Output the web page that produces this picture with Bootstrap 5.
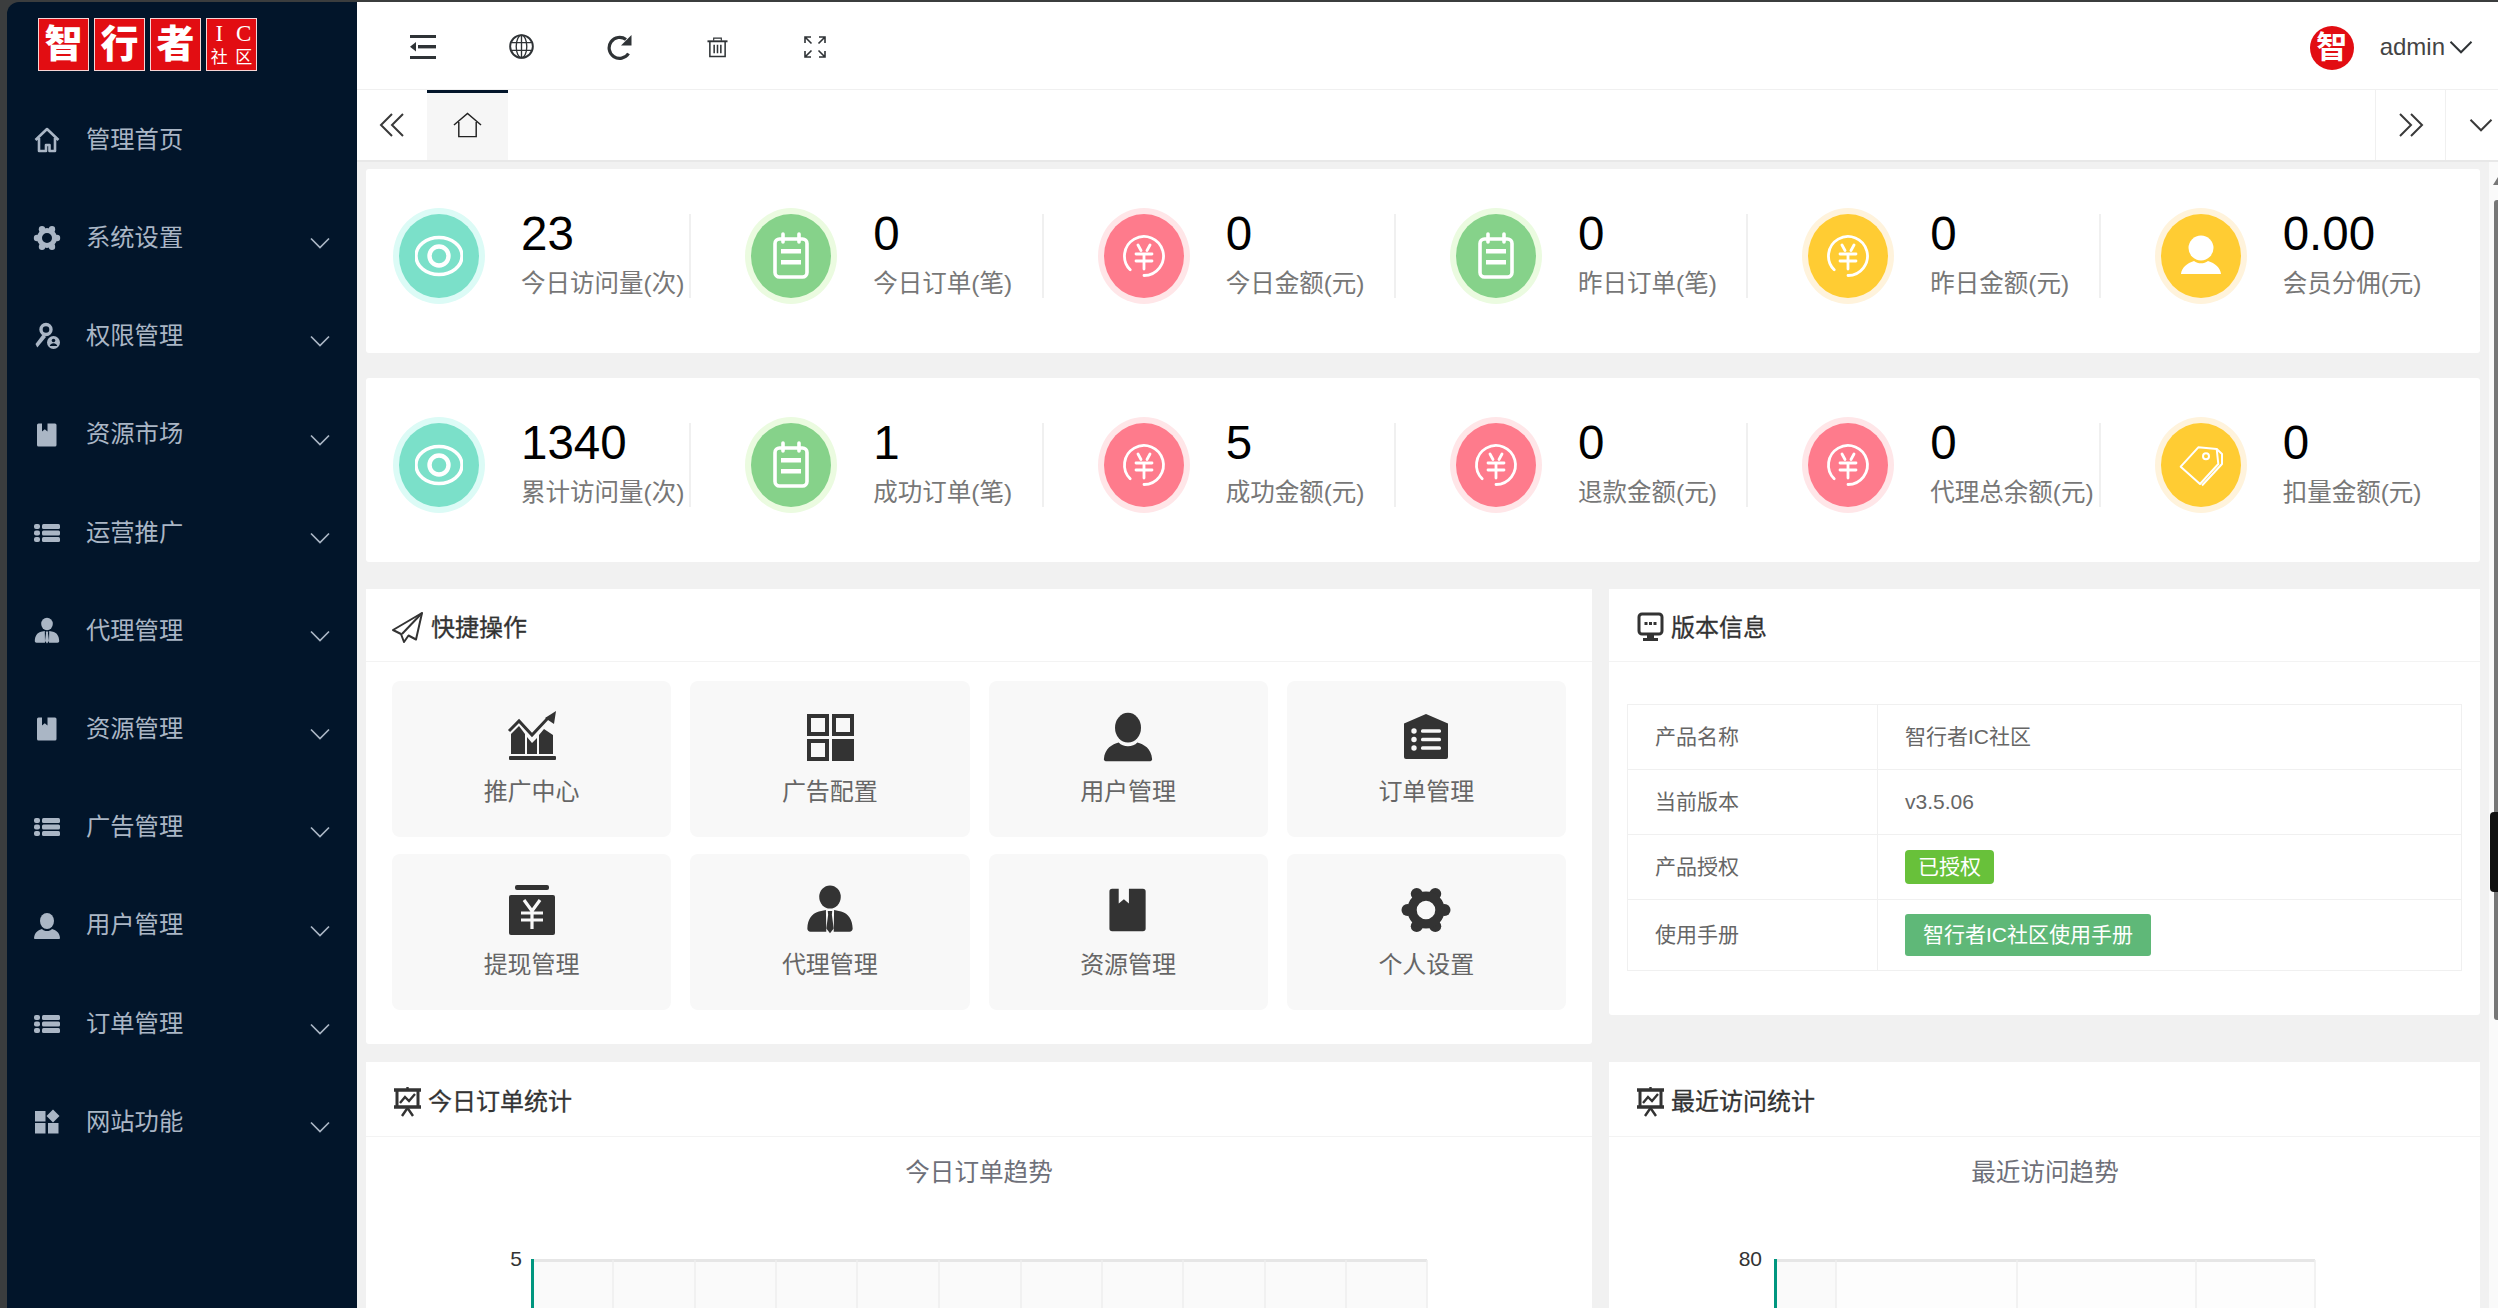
<!DOCTYPE html>
<html lang="zh-CN">
<head>
  <meta charset="UTF-8" />
  <meta name="viewport" content="width=device-width, initial-scale=1.0"/>
  <title>智行者IC社区</title>
  <link href="https://cdn.jsdelivr.net/npm/bootstrap@5.3.3/dist/css/bootstrap.min.css" rel="stylesheet" />
  <style>
    body { font-family: "Liberation Sans", "Noto Sans CJK SC", sans-serif; background: #3b3d3e; overflow: hidden; }
    .app { height: 100vh; padding: 2px 0 0 7px; }

    /* sidebar */
    .sidebar { width: 350px; flex: none; background: #02152a; border-top-left-radius: 12px; color: #aab6c5; }
    .logo { height: 89px; padding: 16px 0 0 31px; gap: 5px; }
    .stamp { width: 51px; height: 53px; background: #e20d12; border: 1px solid #f6d5d5; color: #fff; font-size: 38px; font-weight: 900; line-height: 51px; text-align: center; }
    .stamp.small { display: grid; grid-template-columns: 1fr 1fr; font-size: 17px; line-height: 24px; font-weight: 400; padding-top: 2px; }
    .stamp.small b { font: 400 23px/25px "Liberation Serif", serif; }
    .side-item { height: 98.2px; padding: 0 27px 0 26px; font-size: 24.3px; }
    .side-item .ico { width: 28px; height: 28px; margin-right: 25px; flex: none; }
    .side-item .chev { width: 20px; height: 12px; margin-left: auto; margin-top: 10px; }

    /* header */
    .main { min-width: 0; background: #fff; }
    .topbar { height: 88px; padding: 2px 0 0 17px; border-bottom: 1px solid #f0f0f0; color: #2f3336; }
    .tool { width: 98px; }
    .tool:nth-child(3) { padding-left: 2px; }
    .avatar { width: 44px; height: 44px; background: #e20d12; color: #fff; font-size: 31px; font-weight: 700; line-height: 44px; margin-right: 26px; margin-top: 2px; text-align: center; }
    .admin { font-size: 24px; color: #444; }
    .tabbar { height: 72px; border-bottom: 2px solid #e8e8e8; color: #3a3a3a; }
    .tab-arrow { width: 70px; }
    .tab-home { width: 81px; background: #f6f6f6; border-top: 3px solid #02152a; padding-bottom: 4px; color: #222; }
    .tab-side { border-left: 1px solid #f0f0f0; }

    /* content */
    .content { background: #f1f1f1; padding: 7px 18px 0 9px; height: calc(100vh - 162px); overflow: hidden; position: relative; }
    .panel { border: 0; border-radius: 3px; background: #fff; }
    .stats { height: 184px; margin-bottom: 25px; padding-top: 45px; }
    .stat { width: 16.6666%; padding-left: 33px; }
    .stat-in { height: 84px; margin-right: 27px; border-right: 2px solid #f0f0f0; }
    .circle { width: 80px; height: 84px; flex: none; color: #fff; }
    .circle svg { width: 48px; height: 48px; }
    .c-teal { background: #7be0c9; box-shadow: 0 0 0 6px #dcfbf6; }
    .c-green { background: #86d28a; box-shadow: 0 0 0 6px #ebfbe0; }
    .c-pink { background: #fe7b8c; box-shadow: 0 0 0 6px #ffe6e8; }
    .c-yellow { background: #ffcc33; box-shadow: 0 0 0 6px #fff3dc; }
    .stat-text { margin: -5px 0 0 42px; white-space: nowrap; }
    .num { font-size: 47.500px; line-height: 50px; color: #000; }
    .lbl { font-size: 24.500px; line-height: 34px; margin-top: 8px; color: #777; }

    .dash { display: grid; grid-template-columns: 1226fr 871fr; gap: 18px 17px; align-items: start; margin-top: 27px; }
    .panel-head { height: 73px; padding: 5px 0 0 26px; border-bottom: 1px solid #f3f3f3; background: #fff; font-size: 24px; color: #333; -webkit-text-stroke: .3px #333; }
    .panel-head.tall { height: 75px; }
    .panel-head svg { width: 31px; height: 31px; margin-right: 8px; flex: none; }
    .panel-head svg.tight { margin-right: 5px; }
    .quick { display: grid; grid-template-columns: repeat(4, 1fr); gap: 17px 19px; padding: 19px 26px 34px; }
    .quick-item { height: 156px; background: #f8f8f8; border-radius: 8px; padding-top: 30px; font-size: 24px; color: #666; }
    .quick-item svg { width: 52px; height: 52px; color: #333; margin-bottom: 11px; }
    .info-body { padding: 42px 18px 44px; }
    .info-table { margin: 0; font-size: 21px; color: #666; --bs-table-border-color: #f0f0f0; --bs-table-color: #666; }
    .info-table td { height: 65px; padding: 0 27px; vertical-align: middle; }
    .info-table td:first-child { width: 250px; }
    .info-table tr:last-child td { height: 71px; }
    .auth { background: #68c13a; font-size: 21px; font-weight: 400; padding: 6px 13px; border-radius: 4px; line-height: 22px; }
    .manual { background: #5fb878; color: #fff; font-size: 21px; padding: 0 18px; height: 42px; line-height: 42px; border: 0; border-radius: 3px; }
    .chart text { font-family: "Liberation Sans", "Noto Sans CJK SC", sans-serif; }

    /* window scrollbar over the content */
    .sb { position: absolute; top: 0; right: 0; bottom: 0; width: 9px; background: #fafafa; }
    .sb-thumb { position: absolute; top: 38px; right: 0; width: 4px; height: 820px; background: #777; border-radius: 3px 0 0 3px; }
    .sb-blob { position: absolute; top: 650px; right: 0; width: 8px; height: 80px; background: #111; border-radius: 4px 0 0 4px; }
  </style>
</head>
<body>

  <svg class="d-none" xmlns="http://www.w3.org/2000/svg">
    <symbol id="i-home" viewBox="0 0 28 28"><path d="M2.500 14 14 3l11.500 11M6 12v13h7v-6h3.500v6H22V12" fill="none" stroke="currentColor" stroke-width="2.600" stroke-linejoin="round"/></symbol>
    <symbol id="i-gear" viewBox="0 0 28 28"><g fill="currentColor"><circle cx="9" cy="5.300" r="3.200"/><circle cx="19" cy="5.300" r="3.200"/><circle cx="4" cy="14" r="3.200"/><circle cx="24" cy="14" r="3.200"/><circle cx="9" cy="22.700" r="3.200"/><circle cx="19" cy="22.700" r="3.200"/></g><circle cx="14" cy="14" r="7.500" fill="none" stroke="currentColor" stroke-width="5"/></symbol>
    <symbol id="i-key" viewBox="0 0 28 28"><circle cx="13" cy="7.500" r="5" fill="none" stroke="currentColor" stroke-width="3.400"/><path d="M10 12 2.500 22l1.800 3.500L13 15" fill="currentColor"/><circle cx="20.500" cy="20.500" r="6.500" fill="currentColor"/><circle cx="20.500" cy="18.500" r="1.800" fill="#02152a"/><path d="M16.800 24h7.400c-.4-2-2-2.800-3.700-2.800s-3.300.8-3.700 2.800z" fill="#02152a"/></symbol>
    <symbol id="i-book" viewBox="0 0 28 28"><path d="M5.500 2.500H9v8l2.800-2.300 2.700 2.300v-8h7.500a1.500 1.500 0 0 1 1.500 1.500v20a1.500 1.500 0 0 1-1.500 1.500H5.500A1.500 1.500 0 0 1 4 24V4a1.500 1.500 0 0 1 1.500-1.500z" fill="currentColor"/></symbol>
    <symbol id="i-list" viewBox="0 0 28 28"><g fill="currentColor"><rect x="1" y="5" width="6" height="5" rx="2"/><rect x="1" y="11.500" width="6" height="5" rx="2"/><rect x="1" y="18" width="6" height="5" rx="2"/><rect x="9" y="5" width="18" height="5" rx="1.500"/><rect x="9" y="11.500" width="18" height="5" rx="1.500"/><rect x="9" y="18" width="18" height="5" rx="1.500"/></g></symbol>
    <symbol id="i-agent" viewBox="0 0 28 28"><g fill="currentColor"><ellipse cx="14" cy="7" rx="5.800" ry="6.200"/><path d="M11.800 14 8 14.800C4 16 2 19 1.800 24c0 1 .7 1.700 1.700 1.700H12zM16.200 14l3.800.8c4 1.200 6 4.200 6.200 9.200 0 1-.7 1.700-1.700 1.700H16z"/><path d="M12.800 14.500h2.400l-.2 2 1 7.500-2 2.500-2-2.500 1-7.500z"/></g></symbol>
    <symbol id="i-user" viewBox="0 0 28 28"><g fill="currentColor"><ellipse cx="14" cy="9" rx="7" ry="8"/><path d="M1 26c.5-6 4.500-8 8-9 1.200 1.400 3 2 5 2s3.800-.6 5-2c3.500 1 7.500 3 8 9 0 .5-.5 1-1 1H2c-.5 0-1-.5-1-1z"/></g></symbol>
    <symbol id="i-apps" viewBox="0 0 28 28"><g fill="currentColor"><rect x="2" y="3" width="10.500" height="10.500"/><rect x="2" y="15" width="10.500" height="10.500"/><rect x="15" y="15" width="10.500" height="10.500"/><path d="m20 1.500 6.500 6.500-6.500 6.500L13.500 8z"/></g></symbol>
    <symbol id="i-chev" viewBox="0 0 20 12"><path d="m1 1.500 9 9 9-9" fill="none" stroke="currentColor" stroke-width="1.700"/></symbol>

    <symbol id="i-indent" viewBox="0 0 26 24"><g fill="currentColor"><rect y="0" width="26" height="3"/><rect x="8" y="10" width="18" height="3.400"/><rect y="21" width="26" height="3"/><path d="M0 11.700 6 7v9.400z"/></g></symbol>
    <symbol id="i-globe" viewBox="0 0 26 26"><g fill="none" stroke="currentColor"><circle cx="13" cy="13" r="11.800" stroke-width="2"/><ellipse cx="13" cy="13" rx="5.500" ry="11.800" stroke-width="1.400"/><path d="M13 1v24M2 9h22M2 17h22" stroke-width="1.400"/></g></symbol>
    <symbol id="i-refresh" viewBox="0 0 26 26"><path d="M21.500 19.500A10.500 10.500 0 1 1 19 5.500" fill="none" stroke="currentColor" stroke-width="3.200"/><path d="M24.500 1v10.500H14z" fill="currentColor"/></symbol>
    <symbol id="i-trash" viewBox="0 0 22 22"><g fill="none" stroke="currentColor"><path d="M.5 4.500h21" stroke-width="2"/><path d="M7 4V1.200h8V4" stroke-width="1.200"/><path d="M3 5v15.500h16V5" stroke-width="1.600"/><path d="M7.500 8v9M11 8v9M14.500 8v9" stroke-width="1.600"/></g></symbol>
    <symbol id="i-full" viewBox="0 0 22 22"><g fill="none" stroke="currentColor" stroke-width="1.600"><path d="M1 7V1h6M1 1l6.500 6.500M15 1h6v6M21 1l-6.500 6.500M1 15v6h6M1 21l6.500-6.500M21 15v6h-6M21 21l-6.500-6.500"/></g></symbol>
    <symbol id="i-dleft" viewBox="0 0 26 26"><path d="M13 2 2 13l11 11M24 2 13 13l11 11" fill="none" stroke="currentColor" stroke-width="2"/></symbol>
    <symbol id="i-dright" viewBox="0 0 26 26"><path d="m2 2 11 11L2 24M13 2l11 11-11 11" fill="none" stroke="currentColor" stroke-width="2"/></symbol>
    <symbol id="i-homeline" viewBox="0 0 30 26"><path d="M1 13 15 1l14 12M6 10v15h18V10" fill="none" stroke="currentColor" stroke-width="1.500"/></symbol>

    <symbol id="s-eye" viewBox="0 0 48 48"><ellipse cx="24" cy="24" rx="23" ry="18.500" fill="none" stroke="currentColor" stroke-width="3.400"/><circle cx="24" cy="24" r="9.500" fill="none" stroke="currentColor" stroke-width="4.400"/></symbol>
    <symbol id="s-clip" viewBox="0 0 48 48"><g fill="none" stroke="currentColor" stroke-width="3.600" stroke-linecap="round"><rect x="8" y="7" width="32" height="38" rx="4.500"/><path d="M16 2v8M32 2v8"/></g><rect x="14" y="17" width="20" height="4.500" fill="currentColor"/><rect x="14" y="28" width="20" height="4.500" fill="currentColor"/></symbol>
    <symbol id="s-yen" viewBox="0 0 48 48"><g fill="none" stroke="currentColor" stroke-width="2.800" stroke-linecap="round"><path d="M10.200 37.800A19.500 19.500 0 1 1 24 43.500"/><path d="M18 13l3 5.500M30 13l-3 5.500M16 22h16M16 29h16M24 22v15"/></g></symbol>
    <symbol id="s-user" viewBox="0 0 48 48"><g fill="currentColor"><circle cx="24" cy="16" r="12.500"/><path d="M4 42c.5-6 6-11 13-13 2 1.500 4.500 2.300 7 2.300s5-.8 7-2.300c7 2 12.500 7 13 13z"/></g></symbol>
    <symbol id="s-tag" viewBox="0 0 48 48"><g fill="none" stroke="currentColor" stroke-width="2" stroke-linejoin="round"><path d="M3.700 25.700 21.300 6.300 39.700 8l1.600 15L23 43z"/><path d="M39.700 8l5.300 5v10L25 44.500"/><circle cx="29" cy="15.300" r="3"/></g></symbol>

    <symbol id="q-chart" viewBox="0 0 52 52"><g fill="currentColor"><rect x="3" y="45" width="47" height="4" rx="1"/><path d="M5 43V23l8-8 6 8v20zM21 43V26l5 6 5-5v16zM33 43V24l5-6 9 6v19z"/></g><path d="M3 22 13 12l13 15 16-21" fill="none" stroke="#f8f8f8" stroke-width="1"/><path d="M3 20 13 10l13 14L42 7" fill="none" stroke="currentColor" stroke-width="3"/><path d="M50 0l-2 13-9-6z" fill="currentColor"/></symbol>
    <symbol id="q-grid" viewBox="0 0 52 52"><g fill="none" stroke="currentColor" stroke-width="4"><rect x="5" y="5" width="18" height="18"/><rect x="30" y="5" width="18" height="18"/><rect x="5" y="30" width="18" height="18"/></g><rect x="28" y="28" width="22" height="22" fill="currentColor"/></symbol>
    <symbol id="q-order" viewBox="0 0 52 52"><path d="M26 3 48 12.500V46a2 2 0 0 1-2 2H6a2 2 0 0 1-2-2V12.500z" fill="currentColor"/><g fill="#f8f8f8"><circle cx="14" cy="20" r="2.700"/><circle cx="14" cy="28.500" r="2.700"/><circle cx="14" cy="37" r="2.700"/><rect x="21" y="18.300" width="20" height="3.400" rx="1.500"/><rect x="21" y="26.800" width="20" height="3.400" rx="1.500"/><rect x="21" y="35.300" width="20" height="3.400" rx="1.500"/></g></symbol>
    <symbol id="q-yen" viewBox="0 0 52 52"><rect x="9" y="1" width="34" height="5" rx="2" fill="currentColor"/><rect x="3" y="11" width="46" height="40" rx="2" fill="currentColor"/><g fill="none" stroke="#f8f8f8" stroke-width="3.200"><path d="M18 16l8 11 8-11M15 29h22M15 36h22M26 27v18"/></g></symbol>
    <symbol id="t-plane" viewBox="0 0 31 31"><g fill="none" stroke="currentColor" stroke-width="2" stroke-linejoin="round"><path d="M30 1 1 18l8 4 3 8 4.500-6.500 7.500 4z"/><path d="M30 1 10 22"/></g></symbol>
    <symbol id="t-screen" viewBox="0 0 31 31"><rect x="4" y="2" width="23" height="20" rx="3" fill="none" stroke="currentColor" stroke-width="3"/><g fill="currentColor"><rect x="9.500" y="10" width="3" height="3"/><rect x="14" y="10" width="3" height="3"/><rect x="18.500" y="10" width="3" height="3"/><rect x="12" y="22" width="7" height="4"/><rect x="8" y="26" width="15" height="3"/></g></symbol>
    <symbol id="t-board" viewBox="0 0 31 31"><g fill="none" stroke="currentColor"><path d="M2 4h27M2 21h27" stroke-width="3.400"/><path d="M5 4v17M26 4v17" stroke-width="3"/><path d="M8 17l5-6 4 4 6-7" stroke-width="2.400"/><path d="M15.500 22 10 30M15.500 22l5.500 8M15.500 1v3" stroke-width="2.400"/></g></symbol>
  </svg>

  <div class="app d-flex">
    <aside class="sidebar d-flex flex-column">
      <div class="logo d-flex">
        <span class="stamp">智</span><span class="stamp">行</span><span class="stamp">者</span>
        <span class="stamp small"><b>I</b><b>C</b><span>社</span><span>区</span></span>
      </div>
      <div class="side-item d-flex align-items-center"><svg class="ico"><use href="#i-home"/></svg>管理首页</div>
      <div class="side-item d-flex align-items-center"><svg class="ico"><use href="#i-gear"/></svg>系统设置<svg class="chev"><use href="#i-chev"/></svg></div>
      <div class="side-item d-flex align-items-center"><svg class="ico"><use href="#i-key"/></svg>权限管理<svg class="chev"><use href="#i-chev"/></svg></div>
      <div class="side-item d-flex align-items-center"><svg class="ico"><use href="#i-book"/></svg>资源市场<svg class="chev"><use href="#i-chev"/></svg></div>
      <div class="side-item d-flex align-items-center"><svg class="ico"><use href="#i-list"/></svg>运营推广<svg class="chev"><use href="#i-chev"/></svg></div>
      <div class="side-item d-flex align-items-center"><svg class="ico"><use href="#i-agent"/></svg>代理管理<svg class="chev"><use href="#i-chev"/></svg></div>
      <div class="side-item d-flex align-items-center"><svg class="ico"><use href="#i-book"/></svg>资源管理<svg class="chev"><use href="#i-chev"/></svg></div>
      <div class="side-item d-flex align-items-center"><svg class="ico"><use href="#i-list"/></svg>广告管理<svg class="chev"><use href="#i-chev"/></svg></div>
      <div class="side-item d-flex align-items-center"><svg class="ico"><use href="#i-user"/></svg>用户管理<svg class="chev"><use href="#i-chev"/></svg></div>
      <div class="side-item d-flex align-items-center"><svg class="ico"><use href="#i-list"/></svg>订单管理<svg class="chev"><use href="#i-chev"/></svg></div>
      <div class="side-item d-flex align-items-center"><svg class="ico"><use href="#i-apps"/></svg>网站功能<svg class="chev"><use href="#i-chev"/></svg></div>
    </aside>

    <div class="main flex-grow-1 d-flex flex-column">
      <header class="topbar d-flex align-items-center">
        <div class="tool text-center"><svg width="26" height="24"><use href="#i-indent"/></svg></div>
        <div class="tool text-center"><svg width="25" height="25"><use href="#i-globe"/></svg></div>
        <div class="tool text-center"><svg width="26" height="26"><use href="#i-refresh"/></svg></div>
        <div class="tool text-center"><svg width="21" height="21"><use href="#i-trash"/></svg></div>
        <div class="tool text-center"><svg width="22" height="22"><use href="#i-full"/></svg></div>
        <div class="d-flex align-items-center ms-auto" style="padding-right:25px">
          <span class="avatar rounded-circle">智</span>
          <span class="admin">admin</span>
          <svg class="ms-1" width="24" height="14"><use href="#i-chev"/></svg>
        </div>
      </header>
      <div class="tabbar d-flex">
        <div class="tab-arrow d-flex align-items-center justify-content-center"><svg width="26" height="26"><use href="#i-dleft"/></svg></div>
        <div class="tab-home d-flex align-items-center justify-content-center"><svg width="29" height="26"><use href="#i-homeline"/></svg></div>
        <div class="flex-grow-1"></div>
        <div class="tab-arrow tab-side d-flex align-items-center justify-content-center"><svg width="26" height="26"><use href="#i-dright"/></svg></div>
        <div class="tab-side d-flex align-items-center" style="width:53px;padding-left:23px"><svg width="24" height="14"><use href="#i-chev"/></svg></div>
      </div>

      <div class="content">
        <div class="card panel stats flex-row">
          <div class="stat"><div class="stat-in d-flex"><div class="circle c-teal rounded-circle d-flex align-items-center justify-content-center"><svg><use href="#s-eye"/></svg></div><div class="stat-text"><div class="num">23</div><div class="lbl">今日访问量(次)</div></div></div></div>
          <div class="stat"><div class="stat-in d-flex"><div class="circle c-green rounded-circle d-flex align-items-center justify-content-center"><svg><use href="#s-clip"/></svg></div><div class="stat-text"><div class="num">0</div><div class="lbl">今日订单(笔)</div></div></div></div>
          <div class="stat"><div class="stat-in d-flex"><div class="circle c-pink rounded-circle d-flex align-items-center justify-content-center"><svg><use href="#s-yen"/></svg></div><div class="stat-text"><div class="num">0</div><div class="lbl">今日金额(元)</div></div></div></div>
          <div class="stat"><div class="stat-in d-flex"><div class="circle c-green rounded-circle d-flex align-items-center justify-content-center"><svg><use href="#s-clip"/></svg></div><div class="stat-text"><div class="num">0</div><div class="lbl">昨日订单(笔)</div></div></div></div>
          <div class="stat"><div class="stat-in d-flex"><div class="circle c-yellow rounded-circle d-flex align-items-center justify-content-center"><svg><use href="#s-yen"/></svg></div><div class="stat-text"><div class="num">0</div><div class="lbl">昨日金额(元)</div></div></div></div>
          <div class="stat"><div class="stat-in d-flex border-0"><div class="circle c-yellow rounded-circle d-flex align-items-center justify-content-center"><svg><use href="#s-user"/></svg></div><div class="stat-text"><div class="num">0.00</div><div class="lbl">会员分佣(元)</div></div></div></div>
        </div>
        <div class="card panel stats flex-row mb-0">
          <div class="stat"><div class="stat-in d-flex"><div class="circle c-teal rounded-circle d-flex align-items-center justify-content-center"><svg><use href="#s-eye"/></svg></div><div class="stat-text"><div class="num">1340</div><div class="lbl">累计访问量(次)</div></div></div></div>
          <div class="stat"><div class="stat-in d-flex"><div class="circle c-green rounded-circle d-flex align-items-center justify-content-center"><svg><use href="#s-clip"/></svg></div><div class="stat-text"><div class="num">1</div><div class="lbl">成功订单(笔)</div></div></div></div>
          <div class="stat"><div class="stat-in d-flex"><div class="circle c-pink rounded-circle d-flex align-items-center justify-content-center"><svg><use href="#s-yen"/></svg></div><div class="stat-text"><div class="num">5</div><div class="lbl">成功金额(元)</div></div></div></div>
          <div class="stat"><div class="stat-in d-flex"><div class="circle c-pink rounded-circle d-flex align-items-center justify-content-center"><svg><use href="#s-yen"/></svg></div><div class="stat-text"><div class="num">0</div><div class="lbl">退款金额(元)</div></div></div></div>
          <div class="stat"><div class="stat-in d-flex"><div class="circle c-pink rounded-circle d-flex align-items-center justify-content-center"><svg><use href="#s-yen"/></svg></div><div class="stat-text"><div class="num">0</div><div class="lbl">代理总余额(元)</div></div></div></div>
          <div class="stat"><div class="stat-in d-flex border-0"><div class="circle c-yellow rounded-circle d-flex align-items-center justify-content-center"><svg><use href="#s-tag"/></svg></div><div class="stat-text"><div class="num">0</div><div class="lbl">扣量金额(元)</div></div></div></div>
        </div>

        <div class="dash">
          <div class="card panel">
            <div class="panel-head d-flex align-items-center"><svg><use href="#t-plane"/></svg>快捷操作</div>
            <div class="quick">
              <div class="quick-item text-center"><svg class="d-block mx-auto"><use href="#q-chart"/></svg>推广中心</div>
              <div class="quick-item text-center"><svg class="d-block mx-auto"><use href="#q-grid"/></svg>广告配置</div>
              <div class="quick-item text-center"><svg class="d-block mx-auto"><use href="#i-user"/></svg>用户管理</div>
              <div class="quick-item text-center"><svg class="d-block mx-auto"><use href="#q-order"/></svg>订单管理</div>
              <div class="quick-item text-center"><svg class="d-block mx-auto"><use href="#q-yen"/></svg>提现管理</div>
              <div class="quick-item text-center"><svg class="d-block mx-auto"><use href="#i-agent"/></svg>代理管理</div>
              <div class="quick-item text-center"><svg class="d-block mx-auto"><use href="#i-book"/></svg>资源管理</div>
              <div class="quick-item text-center"><svg class="d-block mx-auto"><use href="#i-gear"/></svg>个人设置</div>
            </div>
          </div>

          <div class="card panel">
            <div class="panel-head d-flex align-items-center"><svg class="tight"><use href="#t-screen"/></svg>版本信息</div>
            <div class="info-body">
              <table class="table table-bordered info-table">
                <tbody>
                  <tr><td>产品名称</td><td>智行者IC社区</td></tr>
                  <tr><td>当前版本</td><td>v3.5.06</td></tr>
                  <tr><td>产品授权</td><td><span class="badge auth">已授权</span></td></tr>
                  <tr><td>使用手册</td><td><a class="btn manual">智行者IC社区使用手册</a></td></tr>
                </tbody>
              </table>
            </div>
          </div>

          <div class="card panel">
            <div class="panel-head tall d-flex align-items-center"><svg class="tight"><use href="#t-board"/></svg>今日订单统计</div>
            <svg class="chart d-block" width="1226" height="180">
              <text x="613" y="44" text-anchor="middle" font-size="24.600" fill="#6e7079">今日订单趋势</text>
              <text x="156" y="129" text-anchor="end" font-size="21" fill="#333">5</text>
              <rect x="166" y="123" width="895" height="60" fill="#fafafa"/>
              <path d="M166 123.500h895" stroke="#e6e6e6" stroke-width="3"/>
              <path d="M247 123v60M329 123v60M410 123v60M491 123v60M573 123v60M655 123v60M736 123v60M817 123v60M899 123v60M980 123v60M1061 123v60" stroke="#eee" stroke-width="1.500"/>
              <path d="M166.500 122v60" stroke="#00967f" stroke-width="3"/>
            </svg>
          </div>

          <div class="card panel">
            <div class="panel-head tall d-flex align-items-center"><svg class="tight"><use href="#t-board"/></svg>最近访问统计</div>
            <svg class="chart d-block" width="871" height="180">
              <text x="436" y="44" text-anchor="middle" font-size="24.600" fill="#6e7079">最近访问趋势</text>
              <text x="153" y="129" text-anchor="end" font-size="21" fill="#333">80</text>
              <rect x="166" y="123" width="61" height="60" fill="#fafafa"/>
              <rect x="227" y="123" width="479" height="60" fill="#fdfdfd"/>
              <path d="M166 123.500h540" stroke="#e6e6e6" stroke-width="3"/>
              <path d="M227 123v60M408 123v60M587 123v60M706 123v60" stroke="#eee" stroke-width="1.500"/>
              <path d="M166.500 122v60" stroke="#00967f" stroke-width="3"/>
            </svg>
          </div>
        </div>

        <div class="sb">
          <svg class="position-absolute" style="top:15px;right:0" width="5" height="8"><path d="M0 8 5 0v8z" fill="#777"/></svg>
          <div class="sb-thumb"></div>
          <div class="sb-blob"></div>
        </div>
      </div>
    </div>
  </div>

  <script src="https://cdn.jsdelivr.net/npm/bootstrap@5.3.3/dist/js/bootstrap.bundle.min.js"></script>
</body>
</html>
